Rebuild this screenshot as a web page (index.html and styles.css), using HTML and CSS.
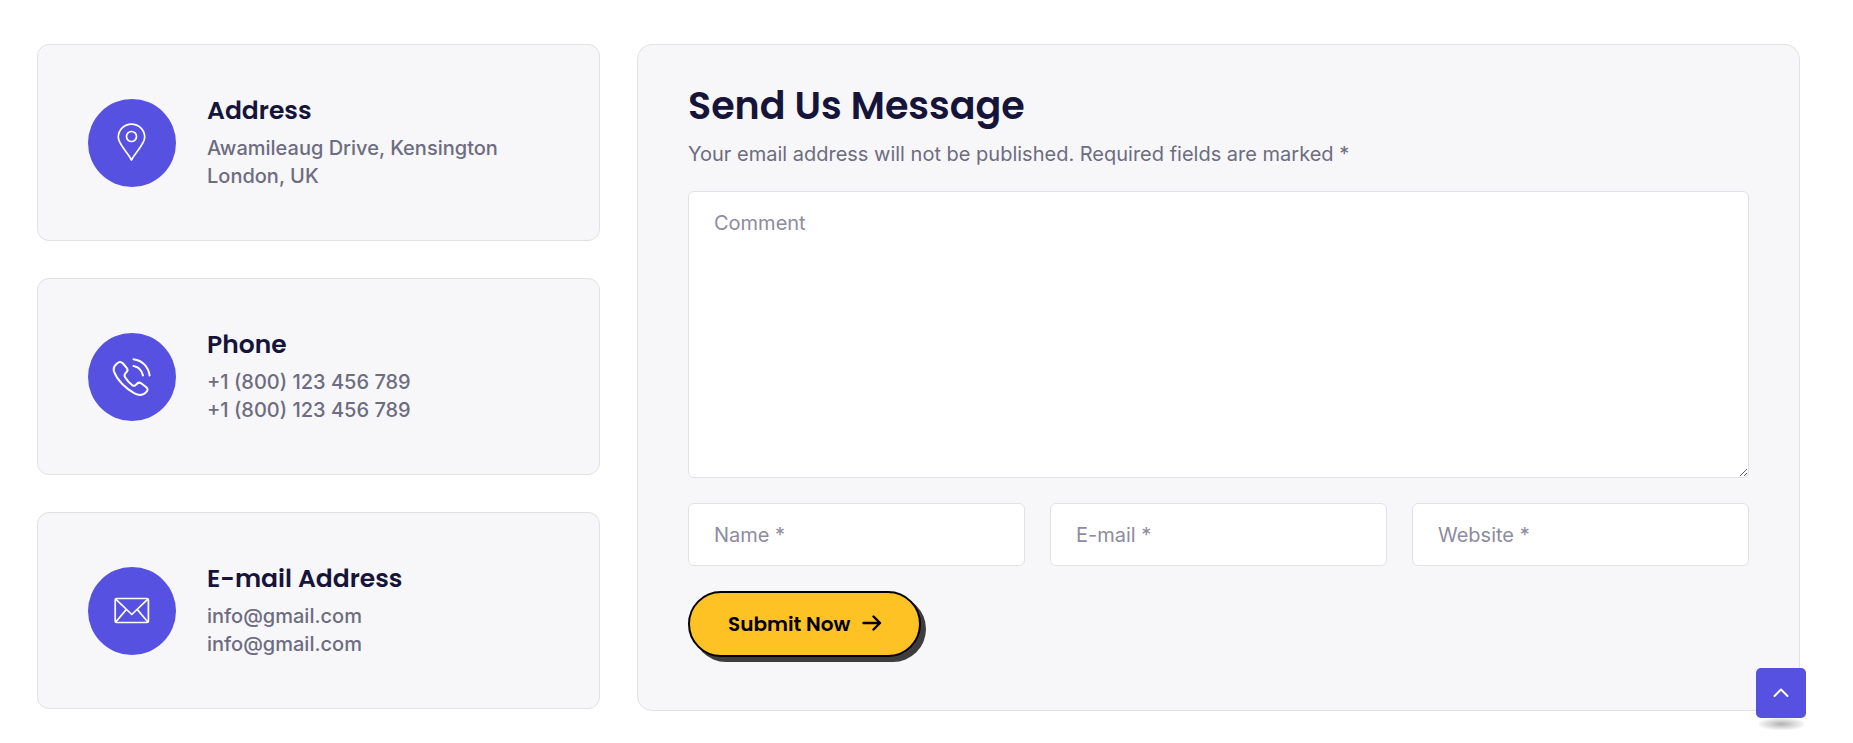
FILE: index.html
```html
<!DOCTYPE html>
<html lang="en">
<head>
<meta charset="utf-8">
<meta name="viewport" content="width=device-width, initial-scale=1">
<title>Contact</title>
<link rel="stylesheet" href="styles.css">
</head>
<body>
<main class="contact">
  <section class="info-list">
    <article class="info-card">
      <span class="info-icon">
        <svg width="40" height="40" viewBox="0 0 40 40" aria-hidden="true"><path d="M19.500 37C15 28.500 6.300 21 6.300 14.300a13.200 13.200 0 0 1 26.400 0C32.700 21 24 28.500 19.500 37Z"/><circle cx="19.500" cy="13.500" r="5"/></svg>
      </span>
      <div class="info-text">
        <h2 class="info-title">Address</h2>
        <p class="info-line">Awamileaug Drive, Kensington</p>
        <p class="info-line">London, UK</p>
      </div>
    </article>
    <article class="info-card">
      <span class="info-icon">
        <svg class="icon-bold" width="40" height="40" viewBox="0 0 40 40" aria-hidden="true"><path d="M5 6.500 C7 4.500 9 4.500 11 6.500L14.700 10.800C16.200 12.600 15.800 14 14.100 15.500C12.300 17 12.100 18.500 13.100 20.300C15 23.600 17.500 26.300 20.500 28.300C22.100 29.200 23.100 28.800 24.100 27.600C25.900 25.300 27.500 25 29.500 26.500L34 30C36 31.600 36 33.200 34.500 34.900C31 38.700 27 38.700 22.500 36.300C13.500 31.500 5 23 2 14.500C.8 10.500 2.500 8.500 5 6.500Z"/><path d="M21.500 2.300C30.500 3.500 36.500 9.800 37.600 18.500M21.500 9C26.500 10 30 13.500 31 18.500"/></svg>
      </span>
      <div class="info-text">
        <h2 class="info-title">Phone</h2>
        <p class="info-line">+1 (800) 123 456 789</p>
        <p class="info-line">+1 (800) 123 456 789</p>
      </div>
    </article>
    <article class="info-card">
      <span class="info-icon">
        <svg width="40" height="40" viewBox="0 0 40 40" aria-hidden="true"><rect x="3.200" y="7.500" width="33.200" height="24" rx="1.500"/><path d="M4 8.300 19.800 23.500 35.600 8.300M4 30.700 14.400 18.400M35.600 30.700 25.200 18.400"/></svg>
      </span>
      <div class="info-text">
        <h2 class="info-title">E-mail Address</h2>
        <p class="info-line">info@gmail.com</p>
        <p class="info-line">info@gmail.com</p>
      </div>
    </article>
  </section>

  <form class="message">
    <h1 class="message-title">Send Us Message</h1>
    <p class="message-note">Your email address will not be published. Required fields are marked *</p>
    <textarea class="field field-comment" aria-label="Comment" placeholder="Comment"></textarea>
    <div class="field-row">
      <input class="field" type="text" aria-label="Name" placeholder="Name *">
      <input class="field" type="email" aria-label="E-mail" placeholder="E-mail *">
      <input class="field" type="text" aria-label="Website" placeholder="Website *">
    </div>
    <button class="submit" type="button">Submit Now
      <svg width="20" height="18" viewBox="0 0 20 18" aria-hidden="true"><path d="M1.500 8H18M11.500 1.500 18 8l-6.500 6.500"/></svg>
    </button>
  </form>
</main>
<button class="to-top" type="button" aria-label="Back to top">
  <svg width="16" height="10" viewBox="0 0 16 10" aria-hidden="true"><path d="M1.500 8 8 1.500l6.500 6.500"/></svg>
</button>
</body>
</html>
```
FILE: styles.css
```css
*, *::before, *::after { box-sizing: border-box; }

body {
  margin: 0;
  background: #fff;
  color: #6d6c80;
  font-family: Inter, "Liberation Sans", sans-serif;
  font-size: 20px;
  line-height: 28px;
}

h1, h2, p { margin: 0; }

.contact {
  display: grid;
  grid-template-columns: 563fr 1163fr;
  align-items: start;
  gap: 37px;
  padding: 44px 53px 32px 37px;
}

.info-list {
  display: grid;
  gap: 37px;
}

.info-card {
  display: flex;
  align-items: center;
  gap: 31px;
  padding: 50px;
  border: 1px solid #e1e1e1;
  border-radius: 12px;
  background: #f7f7fa;
}

.info-icon {
  display: grid;
  flex: none;
  place-items: center;
  width: 88px;
  height: 88px;
  border-radius: 50%;
  background: #5751e1;
}

.info-icon svg, .submit svg, .to-top svg {
  fill: none;
  stroke: currentColor;
  stroke-linecap: round;
  stroke-linejoin: round;
}

.info-icon svg { color: #fff; stroke-width: 1.700; }

.info-icon .icon-bold { stroke-width: 2; }

.info-title {
  margin-bottom: 7px;
  color: #161439;
  font-family: Poppins, Inter, sans-serif;
  font-size: 25px;
  font-weight: 600;
  line-height: 32px;
}

.info-line { font-weight: 500; }

.message {
  display: flex;
  flex-direction: column;
  padding: 36px 50px 53px;
  border: 1px solid #e1e1e1;
  border-radius: 15px;
  background: #f7f7fa;
}

.message-title {
  margin-bottom: 9px;
  color: #161439;
  font-family: Poppins, Inter, sans-serif;
  font-size: 38px;
  font-weight: 600;
  line-height: 50px;
}

.message-note { margin-bottom: 23px; }

.field {
  width: 100%;
  min-width: 0;
  height: 63px;
  padding: 0 25px;
  border: 1px solid #e1e2e6;
  border-radius: 6px;
  background: #fff;
  color: #161439;
  font: inherit;
}

.field::placeholder { color: #8d8b9f; opacity: 1; }

.field-comment {
  display: block;
  height: 287px;
  padding: 17px 25px;
  resize: vertical;
}

.field-row {
  display: grid;
  grid-template-columns: repeat(3, 1fr);
  gap: 25px;
  margin: 25px 0;
}

.submit {
  display: flex;
  align-items: center;
  align-self: flex-start;
  gap: 12px;
  padding: 17px 37px 17px 38px;
  border: 2px solid #000;
  border-radius: 50px;
  background: #ffc224;
  box-shadow: 5px 5px 0 #3d3d3d;
  color: #000;
  font-family: Poppins, Inter, sans-serif;
  font-size: 20px;
  font-weight: 600;
  line-height: 28px;
}

.submit svg { stroke-width: 2.400; }

.to-top {
  position: fixed;
  right: 47px;
  bottom: 25px;
  display: grid;
  place-items: center;
  width: 50px;
  height: 50px;
  padding: 0;
  border: 0;
  border-radius: 5px;
  background: #5751e1;
  color: #fff;
}

.to-top::after {
  content: "";
  position: absolute;
  top: 100%;
  left: 5%;
  width: 90%;
  height: 12px;
  background: radial-gradient(ellipse at center, rgba(0, 0, 0, 0.3) 0%, rgba(0, 0, 0, 0) 80%);
}

.to-top svg { stroke-width: 2; }
```
